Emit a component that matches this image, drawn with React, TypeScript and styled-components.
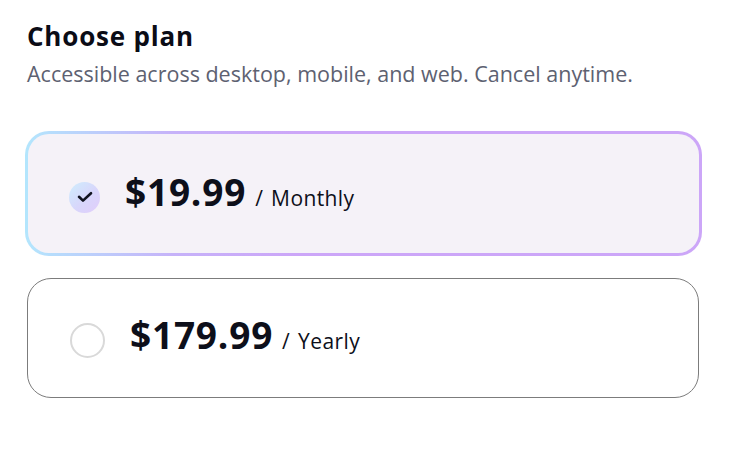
import React, { useState } from "react";
import styled, { createGlobalStyle } from "styled-components";

const Global = createGlobalStyle`
  html, body { margin: 0; padding: 0; background: #ffffff; }
  body { font-family: "Open Sans", "Noto Sans", "Liberation Sans", sans-serif; }
`;

const Page = styled.div`
  width: 732px;
  height: 452px;
  box-sizing: border-box;
  padding: 18px 33px 0 27px;
  display: flex;
  flex-direction: column;
`;

const Title = styled.h1`
  margin: 0;
  font-size: 26px;
  line-height: 36px;
  font-weight: 700;
  color: #0b0c16;
  letter-spacing: 0.8px;
`;

const Subtitle = styled.p`
  margin: 6px 0 0;
  font-size: 21.5px;
  line-height: 28px;
  color: #5d6171;
`;

const List = styled.div`
  margin-top: 43px;
  display: flex;
  flex-direction: column;
  gap: 22px;
`;

const Card = styled.label<{ $selected: boolean }>`
  display: flex;
  align-items: center;
  gap: 25px;
  box-sizing: border-box;
  cursor: pointer;
  border-radius: 24px;
  height: ${(p) => (p.$selected ? "125px" : "120px")};
  margin: ${(p) => (p.$selected ? "0 -3px 0 -2px" : "0")};
  padding: ${(p) => (p.$selected ? "7px 0 0 41px" : "4px 0 0 42px")};
  border: ${(p) => (p.$selected ? "3px solid transparent" : "1px solid #7c7c7c")};
  background: ${(p) =>
    p.$selected
      ? "linear-gradient(#f5f2f8, #f5f2f8) padding-box, linear-gradient(90deg, #b3e6fd 0%, #c6b2f9 22%, #cca6f8 40%, #cca6f8 100%) border-box"
      : "#ffffff"};
`;

const Radio = styled.span<{ $selected: boolean }>`
  flex: none;
  box-sizing: border-box;
  width: ${(p) => (p.$selected ? "31px" : "35px")};
  height: ${(p) => (p.$selected ? "31px" : "35px")};
  border-radius: 50%;
  display: flex;
  align-items: center;
  justify-content: center;
  border: ${(p) => (p.$selected ? "none" : "2px solid #d9d9d9")};
  background: ${(p) =>
    p.$selected ? "linear-gradient(135deg, #cfeefd 0%, #d8d6fb 55%, #e1cdfb 100%)" : "#ffffff"};
`;

const Price = styled.span`
  display: flex;
  align-items: baseline;
  gap: 9px;
  margin-bottom: 12px;
  color: #0d0f1a;
`;

const Amount = styled.span`
  font-size: 37px;
  font-weight: 700;
  letter-spacing: 0.8px;
`;

const Period = styled.span`
  font-size: 21px;
  font-weight: 400;
  letter-spacing: 0.4px;
  word-spacing: 2px;
`;

const HiddenInput = styled.input`
  position: absolute;
  opacity: 0;
  pointer-events: none;
`;

const plans = [
  { id: "monthly", amount: "$19.99", period: "Monthly" },
  { id: "yearly", amount: "$179.99", period: "Yearly" },
];

export default function App() {
  const [selected, setSelected] = useState("monthly");
  return (
    <>
      <Global />
      <Page>
        <Title>Choose plan</Title>
        <Subtitle>Accessible across desktop, mobile, and web. Cancel anytime.</Subtitle>
        <List>
          {plans.map((p) => {
            const isSel = p.id === selected;
            return (
              <Card key={p.id} $selected={isSel}>
                <HiddenInput
                  type="radio"
                  name="plan"
                  checked={isSel}
                  onChange={() => setSelected(p.id)}
                />
                <Radio $selected={isSel}>
                  {isSel && (
                    <svg width="16" height="12" viewBox="0 0 16 12" fill="none">
                      <path
                        d="M2 5.8 L6 9.6 L14 2.2"
                        stroke="#111320"
                        strokeWidth="2.6"
                        strokeLinecap="round"
                        strokeLinejoin="round"
                      />
                    </svg>
                  )}
                </Radio>
                <Price>
                  <Amount>{p.amount}</Amount>
                  <Period>/ {p.period}</Period>
                </Price>
              </Card>
            );
          })}
        </List>
      </Page>
    </>
  );
}
